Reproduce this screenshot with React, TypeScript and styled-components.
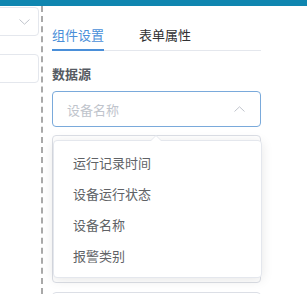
import styled, { createGlobalStyle } from "styled-components";

const GlobalStyle = createGlobalStyle`
  html, body {
    margin: 0;
    padding: 0;
    background: #fff;
  }
  body {
    width: 307px;
    height: 294px;
    overflow: hidden;
    font-family: "Noto Sans CJK SC", "Noto Sans", sans-serif;
    font-size: 13px;
  }
`;

const options = ["运行记录时间", "设备运行状态", "设备名称", "报警类别"];

const ChevronIcon = ({ up }: { up?: boolean }) => (
  <svg width="11" height="6" viewBox="0 0 11 6">
    <path
      d={up ? "M0.5 5.5 L5.5 0.8 L10.5 5.5" : "M0.5 0.5 L5.5 5.2 L10.5 0.5"}
      fill="none"
      stroke="#c0c4cc"
      strokeWidth="1"
    />
  </svg>
);

const App = () => {
  return (
    <Page>
      <GlobalStyle />
      <TopBar />
      <Main>
        <LeftPanel>
          <LeftBox $first>
            <ChevronIcon />
          </LeftBox>
          <LeftBox />
        </LeftPanel>
        <RightPanel>
          <Tabs>
            <Tab $active>组件设置</Tab>
            <Tab>表单属性</Tab>
          </Tabs>
          <Label>数据源</Label>
          <SelectWrap>
            <SelectBox>
              <Placeholder>设备名称</Placeholder>
              <ChevronIcon up />
            </SelectBox>
            <Dropdown>
              <Arrow />
              {options.map((o) => (
                <Option key={o}>{o}</Option>
              ))}
            </Dropdown>
          </SelectWrap>
          <FieldBox>规格名称</FieldBox>
          <FieldBox $last />
        </RightPanel>
      </Main>
    </Page>
  );
};

export default App;

const Page = styled.div`
  width: 307px;
  height: 294px;
  display: flex;
  flex-direction: column;
  overflow: hidden;
`;

const TopBar = styled.div`
  height: 6px;
  flex-shrink: 0;
  background: #0f86b0;
`;

const Main = styled.div`
  flex: 1;
  display: flex;
  min-height: 0;
`;

const LeftPanel = styled.div`
  width: 41px;
  flex-shrink: 0;
  border-right: 2px dashed #a9a9a9;
  overflow: hidden;
  display: flex;
  flex-direction: column;
  gap: 18px;
  padding-top: 1px;
`;

const LeftBox = styled.div<{ $first?: boolean }>`
  width: 80px;
  height: 29px;
  margin-left: -41px;
  border: 1px solid #e4e7ed;
  border-radius: 4px;
  display: flex;
  align-items: center;
  padding-left: 59px;
  box-sizing: border-box;
  svg {
    display: ${(p) => (p.$first ? "block" : "none")};
  }
`;

const RightPanel = styled.div`
  flex: 1;
  padding-left: 9px;
  padding-right: 46px;
  display: flex;
  flex-direction: column;
`;

const Tabs = styled.div`
  margin-top: 14px;
  display: flex;
  gap: 35px;
  border-bottom: 1px solid #e4e7ed;
`;

const Tab = styled.div<{ $active?: boolean }>`
  height: 31px;
  line-height: 30px;
  font-size: 13px;
  color: ${(p) => (p.$active ? "#4a8fd9" : "#303133")};
  box-shadow: ${(p) => (p.$active ? "inset 0 -2px 0 #4a8fd9" : "none")};
  margin-bottom: -1px;
`;

const Label = styled.div`
  margin-top: 14px;
  font-size: 13px;
  font-weight: 700;
  color: #555a62;
  line-height: 18px;
`;

const SelectWrap = styled.div`
  position: relative;
  margin-top: 8px;
`;

const SelectBox = styled.div`
  height: 36px;
  box-sizing: border-box;
  border: 1px solid #7aaadb;
  border-radius: 4px;
  display: flex;
  align-items: center;
  justify-content: space-between;
  padding: 0 15px 0 14px;
`;

const Placeholder = styled.span`
  color: #c0c4cc;
  font-size: 13px;
`;

const Dropdown = styled.div`
  position: absolute;
  top: 49px;
  left: 1px;
  width: 209px;
  box-sizing: border-box;
  padding: 6px 0;
  background: #fff;
  border: 1px solid #e4e7ed;
  border-radius: 4px;
  box-shadow: 0 2px 12px rgba(0, 0, 0, 0.1);
  z-index: 10;
`;

const Arrow = styled.div`
  position: absolute;
  top: -6px;
  left: 96px;
  width: 0;
  height: 0;
  border-left: 6px solid transparent;
  border-right: 6px solid transparent;
  border-bottom: 6px solid #e4e7ed;
  &::after {
    content: "";
    position: absolute;
    top: 1px;
    left: -5px;
    border-left: 5px solid transparent;
    border-right: 5px solid transparent;
    border-bottom: 5px solid #fff;
  }
`;

const Option = styled.div`
  height: 31px;
  line-height: 31px;
  padding-left: 19px;
  color: #606266;
  font-size: 13px;
`;

const FieldBox = styled.div<{ $last?: boolean }>`
  margin-top: ${(p) => (p.$last ? "9px" : "8px")};
  height: ${(p) => (p.$last ? "40px" : "148px")};
  flex-shrink: 0;
  box-sizing: border-box;
  border: 1px solid #dcdfe6;
  border-radius: 4px;
  display: flex;
  align-items: flex-end;
  padding: 0 0 2px 11px;
  color: #5a5e66;
  font-size: 13px;
  line-height: 18px;
`;
